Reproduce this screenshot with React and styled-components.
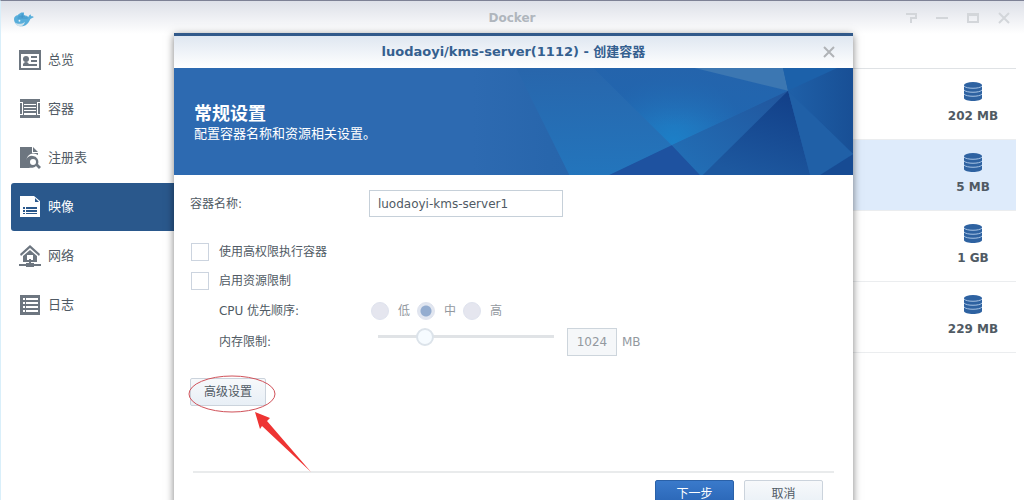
import React, { useState } from 'react'
import styled, { createGlobalStyle, css } from 'styled-components'

const GlobalStyle = createGlobalStyle`
  * {
    box-sizing: border-box;
  }
  body {
    margin: 0;
    background: #fff;
    color: #505a64;
    font-family: 'DejaVu Sans', 'Noto Sans CJK SC', sans-serif;
    font-size: 12px;
    line-height: 20px;
    overflow: hidden;
  }
  button,
  input {
    font: inherit;
    color: inherit;
    margin: 0;
  }
`

const menu = [
  { id: 'overview', label: '总览' },
  { id: 'container', label: '容器' },
  { id: 'registry', label: '注册表' },
  { id: 'image', label: '映像' },
  { id: 'network', label: '网络' },
  { id: 'log', label: '日志' },
]

const images = [
  { size: '202 MB' },
  { size: '5 MB', selected: true },
  { size: '1 GB' },
  { size: '229 MB' },
]

const priorities = [
  { value: 'low', label: '低' },
  { value: 'mid', label: '中' },
  { value: 'high', label: '高' },
]

const iconPaths = {
  overview: (
    <>
      <path fillRule="evenodd" d="M0 1h22v20H0zM2 5v14h18V5z" />
      <circle cx="7" cy="10" r="3" />
      <path d="M4 16c0-4 6-4 6 0zM12 7h6v2h-6zM12 11h6v2h-6zM4 15h14v2H4z" />
    </>
  ),
  container: (
    <path d="M1 1h20v3H1zM1 17h20v3H1zM1 5h2v11H1zM19 5h2v11h-2zM4 4h14v2H4zM5 7h12v2H5zM5 10h12v2H5zM5 13h12v2H5zM4 4h1v13H4zM17 4h1v13h-1z" />
  ),
  registry: (
    <>
      <path d="M1 0h12v6h6v2a7 7 0 0 0-9 11l1 2H1zM14 0l5 5h-5z" />
      <path
        fillRule="evenodd"
        d="M14 9a6 6 0 0 1 5 8l3 3-2 2-3-3a6 6 0 1 1-3-10zm0 3a3 3 0 1 0 0 6 3 3 0 0 0 0-6z"
      />
    </>
  ),
  image: (
    <path
      fillRule="evenodd"
      d="M1 0h14l6 5v16H1zM16 2v4h4zM4 11v2h2v-2zM7 11v2h11v-2zM4 14v2h2v-2zM7 14v2h11v-2zM4 17v1h2v-1zM7 17v1h11v-1z"
    />
  ),
  network: (
    <>
      <path d="M11 0l10 9-1 2-9-8-9 8-1-2z" />
      <path fillRule="evenodd" d="M11 5l7 6v6H4v-6zM8 10v5h6v-5z" />
      <path d="M10 14h2v4h3v1h7v2h-7v1H7v-1H0v-2h7v-1h3z" />
    </>
  ),
  log: (
    <path
      fillRule="evenodd"
      d="M1 1h20v20H1zM4 4v2h2V4zM7 4v2h12V4zM4 8v2h2V8zM7 8v2h12V8zM4 12v2h2v-2zM7 12v2h12v-2zM4 16v2h2v-2zM7 16v2h12v-2z"
    />
  ),
}

const MenuIcon = ({ name }) => (
  <svg width="22" height="22" viewBox="0 0 22 22" fill="currentColor" aria-hidden="true">
    {iconPaths[name]}
  </svg>
)

const Whale = () => (
  <svg width="20" height="20" viewBox="0 -4 22 20" aria-hidden="true">
    <path
      d="M0 7c0-2 2-4 4-4l1-1 3-2h3v3c2 0 4 1 5 2 0-1 1-2 2-3l1 2c1 0 2 0 3 1l-4 2c-2 5-5 8-10 8-4 0-8-3-8-8z"
      fill="#58aedb"
    />
    <path d="M4 6h11M5 4h7M9 1v5" stroke="#3f94c8" strokeWidth="1" />
    <path d="M1 11c3 2 8 2 11-1-1 4-3 5-6 5-2 0-4-1-5-4z" fill="#cfe2ec" />
    <circle cx="6" cy="9" r="1" fill="#e6f3fa" />
  </svg>
)

const Database = () => (
  <svg width="18" height="19" viewBox="0 0 18 19" aria-hidden="true">
    <path d="M0 3v13c0 4 18 4 18 0V3z" fill="#2e62a1" />
    <ellipse cx="9" cy="3" rx="9" ry="3" fill="#2e62a1" />
    <path
      d="M0 4c2 3 16 3 18 0M0 8c2 3 16 3 18 0M0 12c2 3 16 3 18 0"
      fill="none"
      stroke="#a9c4e4"
      strokeWidth="1"
    />
  </svg>
)

const BannerArt = () => (
  <BannerSvg viewBox="0 0 379 108" preserveAspectRatio="none" aria-hidden="true">
    <defs>
      <linearGradient id="fadeIn" x1="0" x2="1" y1="0" y2="0">
        <stop offset="0" stopColor="#2d6ab1" />
        <stop offset="0.2" stopColor="#2866ac" />
        <stop offset="1" stopColor="#1d5ca6" />
      </linearGradient>
      <linearGradient id="shard" x1="0.2" x2="0.3" y1="0" y2="1">
        <stop offset="0" stopColor="#2866ac" />
        <stop offset="1" stopColor="#2375bc" />
      </linearGradient>
      <radialGradient id="glow" gradientUnits="userSpaceOnUse" cx="200" cy="76" r="72">
        <stop offset="0" stopColor="#1c80c8" />
        <stop offset="0.4" stopColor="#2076be" />
        <stop offset="1" stopColor="#2066b0" />
      </radialGradient>
      <linearGradient id="upper" x1="0" x2="0" y1="0" y2="1">
        <stop offset="0" stopColor="#2464ac" />
        <stop offset="1" stopColor="#2464ac" stopOpacity="0" />
      </linearGradient>
      <linearGradient id="deep" x1="0.8" x2="0.4" y1="0" y2="1">
        <stop offset="0" stopColor="#123f88" />
        <stop offset="1" stopColor="#1d589f" />
      </linearGradient>
      <linearGradient id="mid" x1="0" x2="1" y1="1" y2="0">
        <stop offset="0" stopColor="#2271b8" />
        <stop offset="1" stopColor="#21559d" />
      </linearGradient>
      <linearGradient id="edge" x1="0" x2="1" y1="0" y2="0">
        <stop offset="0" stopColor="#1f60a8" />
        <stop offset="1" stopColor="#184f95" />
      </linearGradient>
    </defs>
    <path d="M0 0h379v108H0z" fill="url(#fadeIn)" />
    <path d="M43 0h178l93 23-178 85H96z" fill="url(#shard)" />
    <path d="M120 0h101l93 23-116 55z" fill="url(#glow)" />
    <path d="M120 0h101l93 23-75 35h-61z" fill="url(#upper)" />
    <path d="M221 0h88l5 23z" fill="#3c77b2" />
    <path d="M309 0h54l-49 23z" fill="#1c61aa" />
    <path d="M363 0h16v87l-65-64z" fill="url(#edge)" />
    <path d="M314 23L198 78l28 30h7z" fill="url(#mid)" />
    <path d="M198 78l28 30h-90z" fill="#1e52a0" />
    <path d="M314 23l22 85H229z" fill="url(#deep)" />
    <path d="M314 23l65 64-33 21h-10z" fill="#2060a7" />
    <path d="M379 87v21h-33z" fill="#174b93" />
  </BannerSvg>
)

const CloseIcon = () => (
  <svg width="12" height="12" viewBox="0 0 12 12" stroke="currentColor" strokeWidth="2" aria-hidden="true">
    <path d="M1 1l10 10M11 1L1 11" />
  </svg>
)

const App = () => {
  const [active, setActive] = useState('image')
  const [name, setName] = useState('luodaoyi-kms-server1')

  return (
    <Desktop>
      <GlobalStyle />
      <TitleBar>
        <Whale />
        <WindowTitle>Docker</WindowTitle>
        <WindowTools>
          <ToolButton aria-label="帮助">
            <svg width="12" height="12" viewBox="0 0 12 12">
              <path d="M1 2h10v4H6v5" />
            </svg>
          </ToolButton>
          <ToolButton aria-label="最小化">
            <svg width="12" height="12" viewBox="0 0 12 12">
              <path d="M0 6h12" />
            </svg>
          </ToolButton>
          <ToolButton aria-label="最大化">
            <svg width="12" height="12" viewBox="0 0 12 12">
              <path d="M1 2h10v8H1zM1 3h10" />
            </svg>
          </ToolButton>
          <ToolButton aria-label="关闭">
            <svg width="12" height="12" viewBox="0 0 12 12">
              <path d="M1 1l10 10M11 1L1 11" />
            </svg>
          </ToolButton>
        </WindowTools>
      </TitleBar>

      <Body>
        <Sidebar>
          {menu.map((item) => (
            <MenuItem key={item.id} $active={item.id === active} onClick={() => setActive(item.id)}>
              <MenuIcon name={item.id} />
              {item.label}
            </MenuItem>
          ))}
        </Sidebar>
        <ImageList>
          {images.map((image) => (
            <ImageRow key={image.size} $selected={image.selected}>
              <ImageSize>
                <Database />
                {image.size}
              </ImageSize>
            </ImageRow>
          ))}
        </ImageList>
      </Body>

      <Dialog role="dialog" aria-labelledby="dialog-title">
        <DialogHeader>
          <DialogTitle id="dialog-title">luodaoyi/kms-server(1112) - 创建容器</DialogTitle>
          <CloseButton aria-label="关闭">
            <CloseIcon />
          </CloseButton>
        </DialogHeader>
        <Banner>
          <BannerArt />
          <BannerText>
            <h1>常规设置</h1>
            <p>配置容器名称和资源相关设置。</p>
          </BannerText>
        </Banner>

        <Form onSubmit={(e) => e.preventDefault()}>
          <NameRow>
            <label htmlFor="name">容器名称:</label>
            <TextInput id="name" value={name} onChange={(e) => setName(e.target.value)} />
          </NameRow>
          <CheckRow>
            <CheckBox type="checkbox" />
            使用高权限执行容器
          </CheckRow>
          <CheckRow>
            <CheckBox type="checkbox" />
            启用资源限制
          </CheckRow>
          <SubRow>
            <span id="cpu-label">CPU 优先顺序:</span>
            <RadioGroup role="radiogroup" aria-labelledby="cpu-label">
              {priorities.map((item) => (
                <RadioLabel key={item.value}>
                  <Radio type="radio" name="cpu" defaultChecked={item.value === 'mid'} disabled />
                  {item.label}
                </RadioLabel>
              ))}
            </RadioGroup>
          </SubRow>
          <SubRow>
            <label htmlFor="memory">内存限制:</label>
            <MemoryControls>
              <Slider id="memory" type="range" min="0" max="4096" defaultValue="1000" disabled />
              <MemoryInput aria-label="内存限制 MB" defaultValue="1024" disabled />
              <Unit>MB</Unit>
            </MemoryControls>
          </SubRow>
          <Advanced>
            <Button type="button">高级设置</Button>
            <Callout width="124" height="100" viewBox="0 0 124 100" aria-hidden="true">
              <ellipse cx="44" cy="20" rx="43" ry="18" fill="none" stroke="#d0525a" />
              <path d="M67 38l15 6-3 3 44 51-49-46-2 3z" fill="#ee3433" />
            </Callout>
          </Advanced>
        </Form>

        <Footer>
          <Button $primary>下一步</Button>
          <Button>取消</Button>
        </Footer>
      </Dialog>
    </Desktop>
  )
}

const Desktop = styled.div`
  position: relative;
  height: 100vh;
  overflow: hidden;
  display: flex;
  flex-direction: column;
  border-top: 1px solid #7d8195;
  border-left: 1px solid #d9effa;
`

const TitleBar = styled.header`
  flex: none;
  display: grid;
  grid-template-columns: 1fr auto 1fr;
  align-items: center;
  height: 33px;
  padding: 0 14px 0 13px;
  background: linear-gradient(#dde0e8, #fff);
`

const WindowTitle = styled.div`
  font-weight: 700;
  color: #b0b6bd;
`

const WindowTools = styled.div`
  display: flex;
  justify-content: flex-end;
  gap: 19px;
`

const ToolButton = styled.button`
  display: flex;
  padding: 0;
  border: 0;
  background: none;
  svg {
    fill: none;
    stroke: #d3d6da;
    stroke-width: 2;
  }
`

const Body = styled.div`
  flex: 1;
  display: flex;
  min-height: 0;
`

const Sidebar = styled.nav`
  flex: none;
  width: 230px;
  padding: 2px 0 0 10px;
`

const MenuItem = styled.button`
  display: flex;
  align-items: center;
  gap: 7px;
  width: 100%;
  height: 48px;
  margin-bottom: 1px;
  padding: 0 8px;
  border: 0;
  border-radius: 3px;
  background: none;
  font-size: 13px;
  text-align: left;
  svg {
    color: #6d7680;
  }
  ${({ $active }) =>
    $active &&
    css`
      background: #2a588c;
      color: #fff;
      svg {
        color: #fff;
      }
    `}
`

const ImageList = styled.ul`
  flex: 1;
  margin: 34px 8px 0 0;
  padding: 0;
  list-style: none;
  border-top: 1px solid #dfe2e5;
`

const ImageRow = styled.li`
  display: flex;
  justify-content: flex-end;
  height: 71px;
  padding: 13px 8px 0;
  border-bottom: 1px solid #ebedef;
  background: ${({ $selected }) => ($selected ? '#deebfb' : 'transparent')};
`

const ImageSize = styled.div`
  display: flex;
  flex-direction: column;
  align-items: center;
  gap: 5px;
  width: 70px;
  font-weight: 700;
`

const Dialog = styled.section`
  position: absolute;
  top: 32px;
  left: calc(17% - 1px);
  right: 171px;
  height: 502px;
  display: flex;
  flex-direction: column;
  background: #fff;
  border-top: 3px solid #31598a;
  box-shadow: 0 2px 8px rgba(0, 0, 0, 0.5);
`

const DialogHeader = styled.header`
  flex: none;
  display: flex;
  align-items: center;
  height: 32px;
  padding: 0 18px 0 30px;
  background: linear-gradient(#dfe7f1, #fff);
`

const DialogTitle = styled.div`
  flex: 1;
  text-align: center;
  font-size: 13px;
  font-weight: 700;
  color: #35608f;
`

const CloseButton = styled.button`
  display: flex;
  padding: 0;
  border: 0;
  background: none;
  color: #b0b3b7;
`

const Banner = styled.div`
  position: relative;
  flex: none;
  display: flex;
  align-items: center;
  height: 107px;
  padding: 4px 20px 0;
  background: #2d6ab1;
  color: #fff;
`

const BannerSvg = styled.svg`
  position: absolute;
  top: 0;
  right: 0;
  width: 56%;
  height: 100%;
`

const BannerText = styled.div`
  position: relative;
  h1 {
    margin: 0;
    font-size: 18px;
    line-height: 20px;
  }
  p {
    margin: 0;
    font-size: 13px;
    line-height: 20px;
  }
`

const Form = styled.form`
  flex: 1;
  padding: 15px 16px 0;
`

const NameRow = styled.div`
  display: grid;
  grid-template-columns: 179px 194px;
  align-items: center;
  margin-bottom: 20px;
`

const TextInput = styled.input`
  height: 27px;
  padding: 0 8px;
  border: 1px solid #c6d0d9;
  background: #fff;
`

const CheckRow = styled.label`
  display: flex;
  align-items: center;
  gap: 10px;
  height: 29px;
`

const CheckBox = styled.input`
  appearance: none;
  width: 18px;
  height: 18px;
  margin-left: 1px;
  border: 1px solid #ccd4df;
  background: #fff;
`

const SubRow = styled.div`
  display: grid;
  grid-template-columns: 152px 1fr;
  align-items: center;
  height: 31px;
  padding-left: 29px;
`

const RadioGroup = styled.div`
  display: flex;
`

const RadioLabel = styled.label`
  display: flex;
  align-items: center;
  gap: 9px;
  width: 46px;
  color: #93999f;
`

const Radio = styled.input`
  appearance: none;
  flex: none;
  width: 18px;
  height: 18px;
  border: 1px solid #dfe3ee;
  border-radius: 50%;
  background: #e5e6ef;
  &:checked {
    background: radial-gradient(circle, #94add0 5px, #e1e6f0 6px);
  }
`

const MemoryControls = styled.div`
  display: flex;
  align-items: flex-start;
  padding-left: 7px;
`

const Slider = styled.input`
  appearance: none;
  width: 176px;
  height: 18px;
  margin-right: 13px;
  background: linear-gradient(#e0e3e6, #e0e3e6) center / 100% 3px no-repeat;
  &::-webkit-slider-thumb {
    appearance: none;
    width: 18px;
    height: 18px;
    border: 2px solid #dce3ea;
    border-radius: 50%;
    background: #f6fbff;
  }
`

const MemoryInput = styled.input`
  width: 50px;
  height: 28px;
  padding: 0;
  border: 1px solid #cdd5dc;
  background: #f5f7f9;
  color: #93999f;
  text-align: center;
`

const Unit = styled.span`
  align-self: center;
  margin-left: 5px;
  color: #93999f;
`

const Button = styled.button`
  min-width: 79px;
  height: 28px;
  border: 1px solid ${({ $primary }) => ($primary ? '#2a61a8' : '#cbd3dc')};
  border-radius: 2px;
  background: ${({ $primary }) =>
    $primary ? 'linear-gradient(#3a7acb, #2863b3)' : 'linear-gradient(#f7f9fb, #e8eff6)'};
  color: ${({ $primary }) => ($primary ? '#fff' : '#505a64')};
`

const Advanced = styled.div`
  position: relative;
  margin-top: 21px;
  ${Button} {
    min-width: 76px;
  }
`

const Callout = styled.svg`
  position: absolute;
  top: -4px;
  left: -2px;
  pointer-events: none;
`

const Footer = styled.footer`
  flex: none;
  display: flex;
  justify-content: flex-end;
  gap: 10px;
  height: 64px;
  margin: 0 19px;
  padding: 7px 11px 0 0;
  border-top: 2px solid #e9ebec;
`

export default App
